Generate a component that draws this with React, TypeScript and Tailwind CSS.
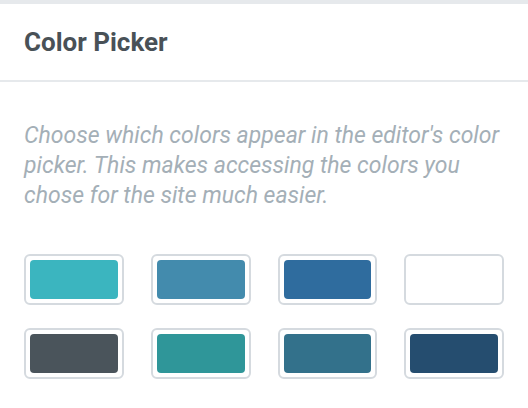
import React from "react";

const colors = [
  "#3bb5bf",
  "#438bad",
  "#2f6c9e",
  "",
  "#4a545b",
  "#2f9699",
  "#33718b",
  "#254d6f",
];

export default function App() {
  return (
    <div
      className="w-[528px] h-[408px] bg-white overflow-hidden"
      style={{ fontFamily: "Roboto, 'Liberation Sans', sans-serif" }}
    >
      <div className="h-[4px] bg-[#e6e9ec]" />
      <div className="h-[78px] flex items-center px-6 border-b-2 border-[#e6e9ec]">
        <h2 className="text-[26px] font-bold text-[#495157] leading-none">Color Picker</h2>
      </div>
      <div className="px-6 pt-[39px]">
        <p className="text-[23px] italic text-[#a4afb7] leading-[30px]">
          Choose which colors appear in the editor's color picker. This makes accessing the colors you chose for the site much easier.
        </p>
        <div className="grid grid-cols-4 gap-x-[27px] gap-y-[23px] mt-[43px] w-[480px]">
          {colors.map((c, i) => (
            <div
              key={i}
              className="h-[51px] rounded-[6px] border-2 border-[#d5dadf] p-[4px] bg-white"
            >
              {c && <div className="h-full w-full rounded-[4px]" style={{ backgroundColor: c }} />}
            </div>
          ))}
        </div>
      </div>
    </div>
  );
}
